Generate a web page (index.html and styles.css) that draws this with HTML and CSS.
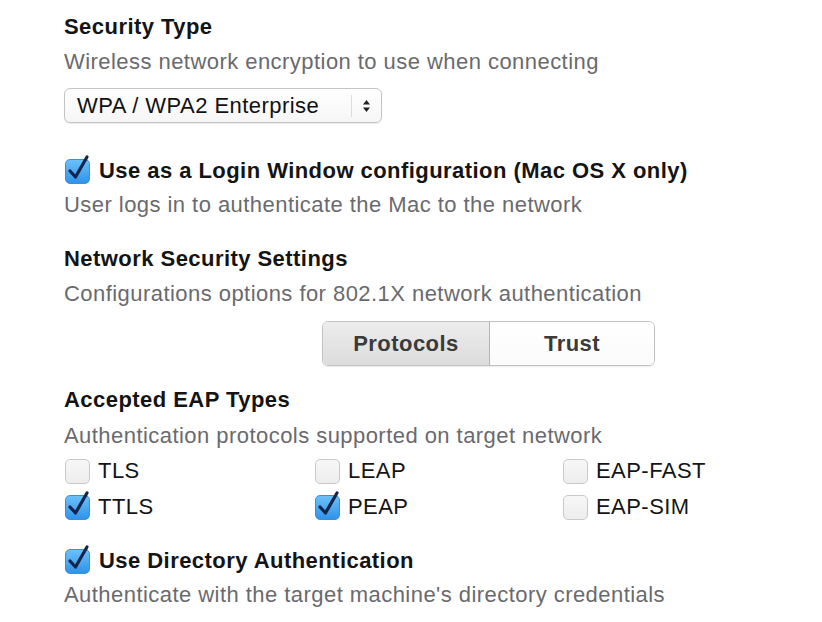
FILE: index.html
```html
<!DOCTYPE html>
<html>
<head>
<meta charset="utf-8">
<link rel="stylesheet" href="styles.css">
</head>
<body>
<div class="page">
  <div class="heading h-first">Security Type</div>
  <div class="desc d-after-head">Wireless network encryption to use when connecting</div>
  <div class="select">
    <span class="select-text">WPA / WPA2 Enterprise</span>
    <span class="select-sep"></span>
    <span class="select-arrows">
      <svg width="9" height="14" viewBox="0 0 9 14"><path d="M4.5 1 L8 5.5 H1 Z" fill="#222"/><path d="M4.5 13 L8 8.5 H1 Z" fill="#222"/></svg>
    </span>
  </div>

  <div class="check-row cr-login">
    <span class="cb checked"><svg class="tick" viewBox="0 0 26 30" width="26" height="30"><path d="M5 17 L10.5 23 L22 3" fill="none" stroke="#14244a" stroke-width="3.2" stroke-linecap="round" stroke-linejoin="round"/></svg></span>
    <span class="bold-label">Use as a Login Window configuration (Mac OS X only)</span>
  </div>
  <div class="desc d-after-row">User logs in to authenticate the Mac to the network</div>

  <div class="heading h-sec">Network Security Settings</div>
  <div class="desc d-after-head">Configurations options for 802.1X network authentication</div>

  <div class="seg-wrap">
    <div class="seg">
      <div class="seg-item active">Protocols</div>
      <div class="seg-item">Trust</div>
    </div>
  </div>

  <div class="heading h-eap">Accepted EAP Types</div>
  <div class="desc d-eap">Authentication protocols supported on target network</div>

  <div class="grid">
    <div class="opt"><span class="cb"></span><span class="opt-label">TLS</span></div>
    <div class="opt"><span class="cb"></span><span class="opt-label">LEAP</span></div>
    <div class="opt"><span class="cb"></span><span class="opt-label">EAP-FAST</span></div>
    <div class="opt"><span class="cb checked"><svg class="tick" viewBox="0 0 26 30" width="26" height="30"><path d="M5 17 L10.5 23 L22 3" fill="none" stroke="#14244a" stroke-width="3.2" stroke-linecap="round" stroke-linejoin="round"/></svg></span><span class="opt-label">TTLS</span></div>
    <div class="opt"><span class="cb checked"><svg class="tick" viewBox="0 0 26 30" width="26" height="30"><path d="M5 17 L10.5 23 L22 3" fill="none" stroke="#14244a" stroke-width="3.2" stroke-linecap="round" stroke-linejoin="round"/></svg></span><span class="opt-label">PEAP</span></div>
    <div class="opt"><span class="cb"></span><span class="opt-label">EAP-SIM</span></div>
  </div>

  <div class="check-row cr-dir">
    <span class="cb checked"><svg class="tick" viewBox="0 0 26 30" width="26" height="30"><path d="M5 17 L10.5 23 L22 3" fill="none" stroke="#14244a" stroke-width="3.2" stroke-linecap="round" stroke-linejoin="round"/></svg></span>
    <span class="bold-label">Use Directory Authentication</span>
  </div>
  <div class="desc d-after-row">Authenticate with the target machine's directory credentials</div>
</div>
</body>
</html>
```
FILE: styles.css
```css
html, body {
  margin: 0;
  padding: 0;
  background: #ffffff;
}
body {
  font-family: "Liberation Sans", Arial, sans-serif;
  width: 822px;
  height: 622px;
  overflow: hidden;
  letter-spacing: 0.45px;
}
.page {
  padding-left: 64px;
  display: flex;
  flex-direction: column;
  align-items: flex-start;
}
.heading {
  font-weight: bold;
  font-size: 22px;
  line-height: 24px;
  color: #141414;
}
.h-first { margin-top: 15px; }
.h-sec { margin-top: 30px; }
.h-eap { margin-top: 22px; }
.desc {
  font-size: 22px;
  line-height: 24px;
  color: #6a6a6e;
}
.d-after-head { margin-top: 11px; }
.d-after-row { margin-top: 9px; }
.d-eap { margin-top: 12px; }

.select {
  margin-top: 14px;
  width: 318px;
  height: 35px;
  box-sizing: border-box;
  border: 1px solid #c4c4c4;
  border-radius: 6px;
  background: linear-gradient(#ffffff, #f6f6f6);
  box-shadow: 0 1px 1px rgba(0,0,0,0.08);
  display: flex;
  align-items: center;
  padding-left: 12px;
}
.select-text {
  font-size: 22px;
  color: #111;
  flex: 1;
}
.select-sep {
  width: 1px;
  height: 22px;
  background: #dcdcdc;
  margin-right: 10px;
}
.select-arrows {
  display: flex;
  width: 17px;
  margin-right: 2px;
}

.check-row {
  display: flex;
  align-items: center;
  height: 26px;
  margin-left: 1px;
}
.cr-login { margin-top: 35px; }
.cr-dir { margin-top: 28px; }
.bold-label {
  font-weight: bold;
  font-size: 22px;
  color: #141414;
  margin-left: 9px;
}

.cb {
  position: relative;
  width: 25px;
  height: 25px;
  box-sizing: border-box;
  border: 1px solid #c9c9c9;
  border-radius: 5px;
  background: linear-gradient(#f7f7f7, #ededed);
  flex: none;
}
.cb.checked {
  border-color: #3a8fd8;
  background: linear-gradient(#6cc0f8, #2f93ea);
}
.tick {
  position: absolute;
  left: -1px;
  top: -6px;
}

.seg-wrap {
  margin-top: 15px;
  margin-left: 258px;
}
.seg {
  display: flex;
  width: 333px;
  height: 45px;
  box-sizing: border-box;
  border: 1px solid #c2c2c2;
  border-radius: 6px;
  overflow: hidden;
  box-shadow: 0 1px 1px rgba(0,0,0,0.08);
}
.seg-item {
  flex: 1;
  display: flex;
  align-items: center;
  justify-content: center;
  font-weight: bold;
  font-size: 22px;
  color: #3a3a3a;
  background: linear-gradient(#ffffff, #fbfbfb);
}
.seg-item.active {
  flex: none;
  width: 166px;
  background: linear-gradient(#ededed, #dcdcdc);
  border-right: 1px solid #b5b5b5;
}

.grid {
  margin-top: 10px;
  margin-left: 1px;
  display: grid;
  grid-template-columns: 250px 248px auto;
  row-gap: 10px;
}
.opt {
  display: flex;
  align-items: center;
  height: 26px;
}
.opt-label {
  font-size: 22px;
  color: #141414;
  margin-left: 8px;
}
```
